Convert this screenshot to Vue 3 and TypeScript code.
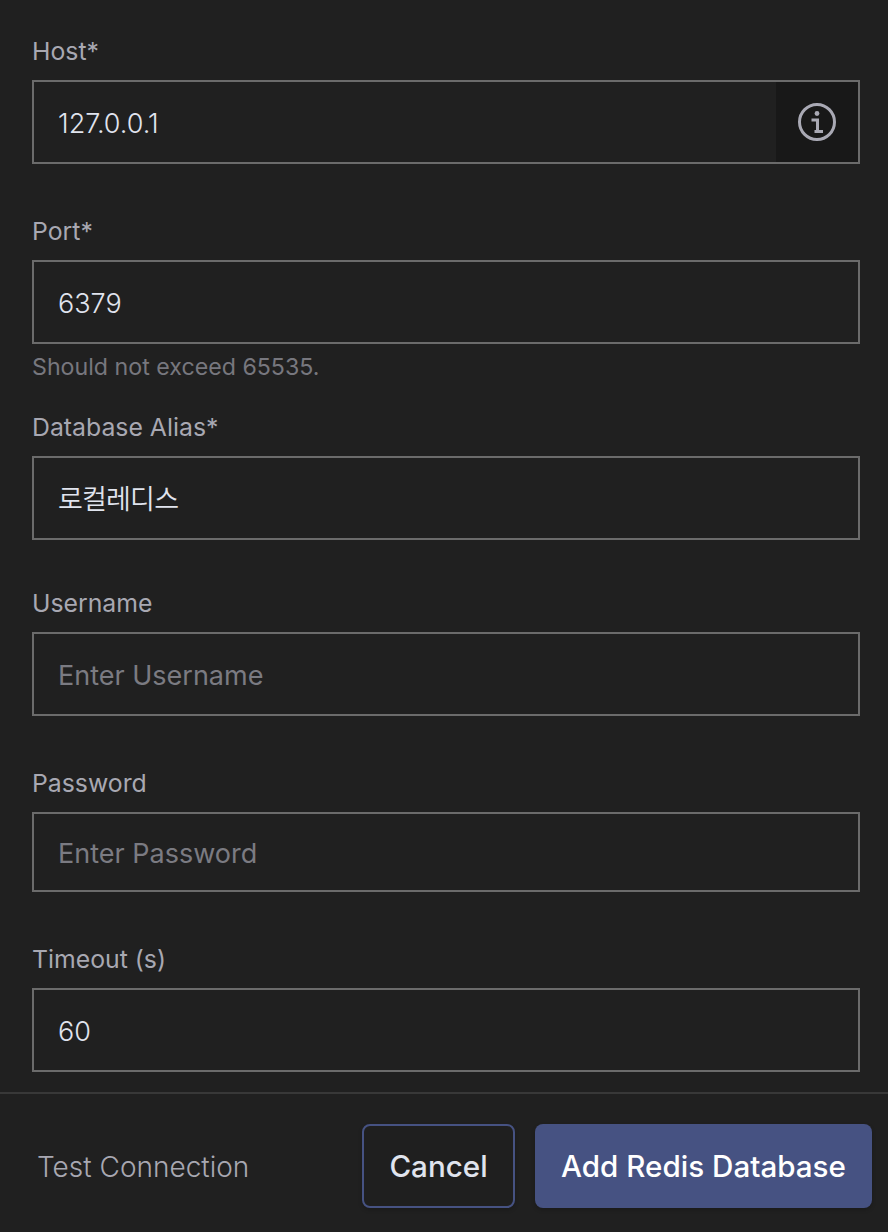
<script setup lang="ts">
interface Field {
  label: string;
  value?: string;
  placeholder?: string;
  hint?: string;
  info?: boolean;
  cls?: string;
}

const fields: Field[] = [
  { label: "Host*", value: "127.0.0.1", info: true },
  { label: "Port*", value: "6379", hint: "Should not exceed 65535." },
  { label: "Database Alias*", value: "로컬레디스", cls: "after-hint korean" },
  { label: "Username", placeholder: "Enter Username", cls: "tight" },
  { label: "Password", placeholder: "Enter Password", cls: "short" },
  { label: "Timeout (s)", value: "60" },
];
</script>

<template>
  <div class="panel">
    <form class="form" @submit.prevent>
      <div v-for="f in fields" :key="f.label" :class="['field', f.cls]">
        <label class="label">{{ f.label }}</label>
        <div class="control">
          <input class="input" type="text" :value="f.value" :placeholder="f.placeholder" />
          <span v-if="f.info" class="append">
            <svg width="40" height="40" viewBox="0 0 40 40" fill="none">
              <circle cx="20" cy="20" r="17.5" stroke="#a9a9b4" stroke-width="3" />
              <circle cx="20" cy="11.5" r="2.4" fill="#a9a9b4" />
              <path d="M14.5 18H20.5V29.5H26M17.5 29.5H26" stroke="#a9a9b4" stroke-width="3" />
            </svg>
          </span>
        </div>
        <div v-if="f.hint" class="hint">{{ f.hint }}</div>
      </div>
    </form>

    <footer class="footer">
      <button class="link" type="button">Test Connection</button>
      <div class="actions">
        <button class="btn secondary" type="button">Cancel</button>
        <button class="btn primary" type="button">Add Redis Database</button>
      </div>
    </footer>
  </div>
</template>

<style scoped>
.panel {
  width: 888px;
  height: 1232px;
  background: #202020;
  display: flex;
  flex-direction: column;
  font-family: Inter, "Noto Sans CJK KR", sans-serif;
  overflow: hidden;
}

.form {
  flex: 1;
  padding: 36px 28px 20px 32px;
}

.field {
  margin-top: 52px;
}
.field:first-child {
  margin-top: 0;
}
.field.after-hint {
  margin-top: 24px;
}
.field.tight {
  margin-top: 48px;
}

.label {
  display: block;
  height: 32px;
  margin-bottom: 12px;
  font-size: 24.8px;
  line-height: 30px;
  color: #a8a8b2;
}

.control {
  display: flex;
  height: 84px;
  border: 2px solid #6b6b6b;
  box-sizing: border-box;
}
.short .control {
  height: 80px;
}

.input {
  flex: 1;
  min-width: 0;
  padding: 2px 24px 0;
  background: transparent;
  border: none;
  outline: none;
  font-family: inherit;
  font-size: 27px;
  font-weight: 350;
  color: #e0e4ee;
}
.korean .input {
  padding: 0 24px 2px;
  letter-spacing: -0.8px;
}
.input::placeholder {
  color: #7b7b82;
  font-weight: 380;
  opacity: 1;
}

.append {
  width: 82px;
  background: #181818;
  display: flex;
  align-items: center;
  justify-content: center;
}

.hint {
  height: 44px;
  padding-top: 8px;
  box-sizing: border-box;
  font-size: 23.2px;
  line-height: 30px;
  color: #77777e;
}

.footer {
  height: 138px;
  border-top: 2px solid #383838;
  display: flex;
  align-items: flex-start;
  justify-content: space-between;
  padding: 0 16px 0 37px;
}

.link {
  margin-top: 53px;
  padding: 0;
  background: none;
  border: none;
  font-family: inherit;
  font-size: 28px;
  line-height: 40px;
  font-weight: 300;
  color: #a8a8b2;
}

.actions {
  display: flex;
  gap: 20px;
  margin-top: 30px;
}

.btn {
  height: 84px;
  padding: 0;
  border-radius: 8px;
  font-family: inherit;
  font-size: 29.6px;
  font-weight: 530;
  box-sizing: border-box;
  box-shadow: 0 2px 4px rgba(0, 0, 0, 0.2);
}
.secondary {
  width: 153px;
  background: #1f1f1f;
  border: 2px solid #465282;
  color: #e0e4ee;
}
.primary {
  width: 337px;
  background: #465282;
  border: none;
  color: #fff;
}
</style>
